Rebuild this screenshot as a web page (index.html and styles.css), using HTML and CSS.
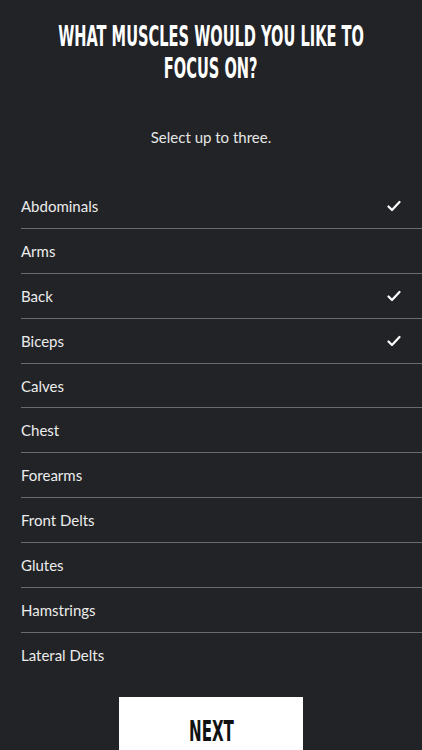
FILE: index.html
```html
<!DOCTYPE html>
<html>
<head>
<meta charset="utf-8">
<link rel="stylesheet" href="styles.css">
</head>
<body>
<div class="screen">
  <h1 class="title"><span class="title-line">WHAT MUSCLES WOULD YOU LIKE TO</span><span class="title-line">FOCUS ON?</span></h1>
  <p class="subtitle">Select up to three.</p>
  <ul class="list">
    <li class="row"><span>Abdominals</span><svg class="check" viewBox="0 0 14 12"><path d="M1.5 6.5 L5 10 L12.5 2" /></svg></li>
    <li class="row"><span>Arms</span></li>
    <li class="row"><span>Back</span><svg class="check" viewBox="0 0 14 12"><path d="M1.5 6.5 L5 10 L12.5 2" /></svg></li>
    <li class="row"><span>Biceps</span><svg class="check" viewBox="0 0 14 12"><path d="M1.5 6.5 L5 10 L12.5 2" /></svg></li>
    <li class="row"><span>Calves</span></li>
    <li class="row"><span>Chest</span></li>
    <li class="row"><span>Forearms</span></li>
    <li class="row"><span>Front Delts</span></li>
    <li class="row"><span>Glutes</span></li>
    <li class="row"><span>Hamstrings</span></li>
    <li class="row last"><span>Lateral Delts</span></li>
  </ul>
  <div class="footer">
    <button class="next"><span class="next-label">NEXT</span></button>
  </div>
</div>
</body>
</html>
```
FILE: styles.css
```css
html, body {
  margin: 0;
  padding: 0;
  background: #222327;
  height: 100%;
  overflow: hidden;
}
.screen {
  display: flex;
  flex-direction: column;
  color: #ffffff;
}
.title {
  margin: 0;
  padding-top: 20px;
  display: flex;
  flex-direction: column;
  align-items: center;
  font-family: "DejaVu Sans Condensed", "DejaVu Sans", sans-serif;
  font-weight: bold;
  font-size: 29px;
  line-height: 32px;
  letter-spacing: 0;
  color: #ffffff;
}
.title-line {
  display: block;
  white-space: nowrap;
  transform: scaleX(0.56);
}
.subtitle {
  margin: 43px 0 0;
  text-align: center;
  font-family: "Lato", "Noto Sans", sans-serif;
  font-size: 15px;
  line-height: 20px;
  color: #e6e6e6;
}
.list {
  list-style: none;
  margin: 37px 0 0 21px;
  padding: 0;
}
.row {
  height: 43.9px;
  border-bottom: 1px solid #6b6b6e;
  display: flex;
  align-items: center;
  justify-content: space-between;
  padding-right: 21px;
  font-family: "Lato", "Noto Sans", sans-serif;
  font-size: 15px;
  color: #ececec;
}
.row.last {
  border-bottom: none;
}
.check {
  width: 14px;
  height: 12px;
  fill: none;
  stroke: #ffffff;
  stroke-width: 2.2;
  stroke-linecap: round;
  stroke-linejoin: round;
}
.footer {
  display: flex;
  justify-content: center;
  margin-top: 20px;
}
.next {
  box-sizing: border-box;
  width: 184px;
  height: 53px;
  border: none;
  background: #ffffff;
  color: #111111;
  font-family: "DejaVu Sans Condensed", "DejaVu Sans", sans-serif;
  font-weight: bold;
  font-size: 28px;
  line-height: 34px;
  padding: 17px 0 0;
}
.next-label {
  display: inline-block;
  transform: scaleX(0.6);
}
```
